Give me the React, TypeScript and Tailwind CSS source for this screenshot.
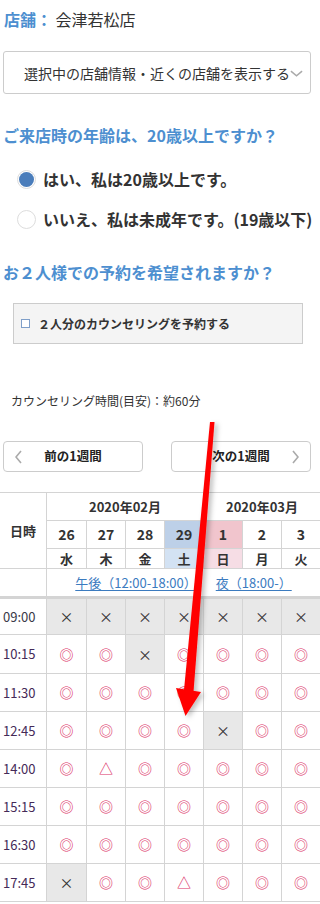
import React from "react";

type Mark = "o" | "x" | "t";

const days = [
  { d: "26", w: "水", top: "", bot: "" },
  { d: "27", w: "木", top: "", bot: "" },
  { d: "28", w: "金", top: "", bot: "" },
  { d: "29", w: "土", top: "bg-[#bdd0e8]", bot: "bg-[#d3e2f3]" },
  { d: "1", w: "日", top: "bg-[#f1c5cd]", bot: "bg-[#f6dde5]" },
  { d: "2", w: "月", top: "", bot: "" },
  { d: "3", w: "火", top: "", bot: "" },
];

const slots: { time: string; marks: string; h: string }[] = [
  { time: "09:00", marks: "xxxxxxx", h: "h-[36px]" },
  { time: "10:15", marks: "ooxoooo", h: "h-[39px]" },
  { time: "11:30", marks: "ooooooo", h: "h-[38px]" },
  { time: "12:45", marks: "ooooxoo", h: "h-[38px]" },
  { time: "14:00", marks: "otooooo", h: "h-[38px]" },
  { time: "15:15", marks: "ooooooo", h: "h-[38px]" },
  { time: "16:30", marks: "ooooooo", h: "h-[38px]" },
  { time: "17:45", marks: "xootooo", h: "h-[38px]" },
];

function Chevron({ dir, className }: { dir: "left" | "right" | "down"; className?: string }) {
  const pts =
    dir === "left" ? "6,1 1,7 6,13" : dir === "right" ? "1,1 6,7 1,13" : "1,1 7,6 13,1";
  const vb = dir === "down" ? "0 0 14 7" : "0 0 7 14";
  return (
    <svg viewBox={vb} className={className} fill="none" stroke="#aaa" strokeWidth="1.6">
      <polyline points={pts} />
    </svg>
  );
}

function Cell({ mark, last }: { mark: Mark; last: boolean }) {
  const base = `flex items-center justify-center border-b border-[#d4d4d4] ${last ? "" : "border-r"}`;
  if (mark === "x")
    return <div className={`${base} bg-[#e8e8e8] text-[#333] text-[14px]`}>×</div>;
  return (
    <div className={`${base} bg-white text-[#dc3568] text-[14px] font-medium`}>{mark === "o" ? "◎" : "△"}</div>
  );
}

export default function App() {
  return (
    <div className="relative w-[320px] min-h-[904px] bg-white text-[#333] font-['Noto_Sans_CJK_JP',sans-serif] overflow-hidden">
      <div className="px-[3px]">
        <p className="pt-[9px] pl-[1px] text-[16px] leading-[20px] whitespace-nowrap">
          <span className="font-bold text-[#4d8fd0]">店舗：</span> 会津若松店
        </p>

        <div className="mt-[22px] w-[308px] h-[43px] border border-[#ccc] rounded-[3px] flex items-center pl-[20px] pr-[7px]">
          <span className="text-[14px] leading-[18px] whitespace-nowrap">選択中の店舗情報・近くの店舗を表示する</span>
          <Chevron dir="down" className="w-[14px] h-[7px] mt-[2px]" />
        </div>

        <p className="mt-[31px] text-[16px] leading-[20px] font-bold text-[#4d8fd0] whitespace-nowrap">
          ご来店時の年齢は、20歳以上ですか？
        </p>

        <div className="mt-[24px] ml-[14px] flex items-center h-[20px] gap-[7px]">
          <span className="w-[19px] h-[19px] rounded-full border border-[#ddd] p-[1px] flex">
            <span className="flex-1 rounded-full bg-[#4a7dbb]" />
          </span>
          <span className="text-[16px] leading-[20px] font-bold whitespace-nowrap">はい、私は20歳以上です。</span>
        </div>
        <div className="mt-[20px] ml-[14px] flex items-center h-[20px] gap-[7px]">
          <span className="w-[19px] h-[19px] rounded-full border border-[#ddd] bg-white" />
          <span className="text-[16px] leading-[20px] font-bold whitespace-nowrap">いいえ、私は未成年です。(19歳以下)</span>
        </div>

        <p className="mt-[33px] text-[16px] leading-[20px] font-bold text-[#4d8fd0] whitespace-nowrap">
          お２人様での予約を希望されますか？
        </p>

        <div className="mt-[21px] ml-[10px] w-[290px] h-[41px] bg-[#f4f4f4] border border-[#ccc] flex items-center pl-[7px] gap-[8px]">
          <span className="w-[9px] h-[9px] border border-[#7f9fc9] bg-white" />
          <span className="text-[12px] leading-[16px] font-bold whitespace-nowrap">２人分のカウンセリングを予約する</span>
        </div>

        <p className="mt-[49px] ml-[8px] text-[12px] leading-[16px] whitespace-nowrap">
          カウンセリング時間(目安)：約60分
        </p>

        <div className="mt-[32px] flex gap-[28px]">
          <button className="relative w-[140px] h-[31px] border border-[#ccc] rounded-[4px] bg-white flex items-center justify-center text-[12.5px] font-bold text-[#222]">
            <Chevron dir="left" className="absolute left-[11px] top-[8px] w-[7px] h-[14px]" />
            前の1週間
          </button>
          <button className="relative w-[140px] h-[31px] border border-[#ccc] rounded-[4px] bg-white flex items-center justify-center text-[12.5px] font-bold text-[#222]">
            次の1週間
            <Chevron dir="right" className="absolute right-[11px] top-[8px] w-[7px] h-[14px]" />
          </button>
        </div>
      </div>

      <div className="mt-[20px] border-t border-[#d4d4d4] grid grid-cols-[47px_40px_39px_39px_39px_39px_39px_1fr] text-[13px]">
        <div className="row-span-3 flex items-center justify-center border-r border-b border-[#d4d4d4] font-bold">日時</div>
        <div className="col-span-4 h-[28px] flex items-center justify-center border-r border-b border-[#d4d4d4] font-bold">2020年02月</div>
        <div className="col-span-3 h-[28px] flex items-center justify-center border-b border-[#d4d4d4] font-bold">2020年03月</div>
        {days.map((d, i) => (
          <div
            key={"d" + i}
            className={`h-[28px] flex items-center justify-center border-b border-[#d4d4d4] font-bold text-[14px] ${i < 6 ? "border-r" : ""} ${d.top}`}
          >
            {d.d}
          </div>
        ))}
        {days.map((d, i) => (
          <div
            key={"w" + i}
            className={`h-[20px] flex items-center justify-center border-b border-[#d4d4d4] font-bold ${i < 6 ? "border-r" : ""} ${d.bot}`}
          >
            {d.w}
          </div>
        ))}
        <div className="h-[30px] border-r border-b-[3px] border-[#d4d4d4]" />
        <div className="col-span-7 h-[30px] border-b-[3px] border-[#d4d4d4] flex items-center justify-center gap-[19px] text-[#3b7bbf]">
          <span className="underline underline-offset-2">午後（12:00-18:00）</span>
          <span className="underline underline-offset-2">夜（18:00-）</span>
        </div>
        {slots.map((s, r) => (
          <React.Fragment key={s.time}>
            <div
              className={`${s.h} flex items-center pl-[3px] border-r border-b border-[#d4d4d4] ${r === 0 ? "text-[#3a3a48]" : "text-[#452a58]"}`}
            >
              {s.time}
            </div>
            {s.marks.split("").map((m, i) => (
              <Cell key={i} mark={m as Mark} last={i === 6} />
            ))}
          </React.Fragment>
        ))}
      </div>

      <svg
        className="absolute left-0 top-0 w-[320px] h-[904px] pointer-events-none"
        viewBox="0 0 320 904"
      >
        <defs>
          <filter id="sh" x="-50%" y="-10%" width="200%" height="120%">
            <feDropShadow dx="3" dy="2" stdDeviation="2.5" floodColor="#000" floodOpacity="0.25" />
          </filter>
        </defs>
        <g filter="url(#sh)" fill="#ff0000">
          <polygon points="210,422 214.5,422 193.5,692 184,690" />
          <polygon points="176,688 201,692 185.5,716" />
        </g>
      </svg>
    </div>
  );
}
